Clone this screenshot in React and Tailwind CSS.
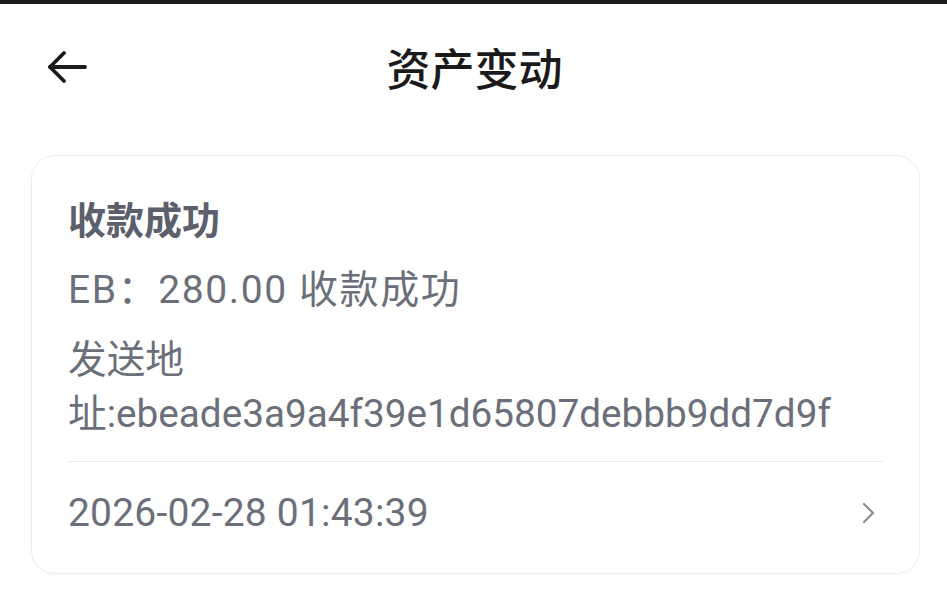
import React from "react";

const FONT = { fontFamily: 'Roboto, "Noto Sans CJK SC", sans-serif' };
const CJK = { fontFamily: '"Noto Sans CJK SC", sans-serif' };

export default function App() {
  return (
    <div className="w-[947px] h-[611px] bg-white overflow-hidden" style={FONT}>
      <div className="h-[4px] bg-[#1c1c1c]" />
      <div className="relative h-[126px] flex items-center justify-center">
        <svg
          className="absolute left-[46px] top-[42px]"
          width="42"
          height="42"
          viewBox="0 0 42 42"
          fill="none"
          stroke="#1a1a1a"
          strokeWidth="3.8"
          strokeLinecap="round"
          strokeLinejoin="round"
        >
          <path d="M39 21H4" />
          <path d="M18 7L4 21L18 35" />
        </svg>
        <div
          className="text-[44px] leading-[56px] text-[#1a1a1a] font-medium pl-[2px]"
          style={CJK}
        >
          资产变动
        </div>
      </div>
      <div className="ml-[31px] mr-[27px] mt-[25px] rounded-[24px] border border-[#ececee] shadow-[0_1px_3px_rgba(0,0,0,0.03)] px-[36px] pt-[38px] pb-[36px]">
        <div
          className="text-[38px] leading-[48px] font-bold text-[#5b606c]"
          style={CJK}
        >
          收款成功
        </div>
        <div className="mt-[24px] text-[39px] leading-[48px] tracking-[1.6px] text-[#6b6f7a]">
          EB：280.00 收款成功
        </div>
        <div className="mt-[19px] text-[38.7px] leading-[54px] text-[#6b6f7a]">
          发送地址:ebeade3a9a4f39e1d65807debbb9dd7d9f
        </div>
        <div className="mt-[20px] border-t border-[#ebebed]" />
        <div className="mt-[27px] flex items-center justify-between">
          <div className="text-[39px] leading-[48px] tracking-[0.2px] text-[#6b6f7a]">
            2026-02-28 01:43:39
          </div>
          <svg
            width="16"
            height="24"
            viewBox="0 0 16 24"
            fill="none"
            stroke="#8c8f96"
            strokeWidth="2.2"
            strokeLinecap="round"
            strokeLinejoin="round"
            className="mr-[6px]"
          >
            <path d="M3 3L12 12L3 21" />
          </svg>
        </div>
      </div>
    </div>
  );
}
